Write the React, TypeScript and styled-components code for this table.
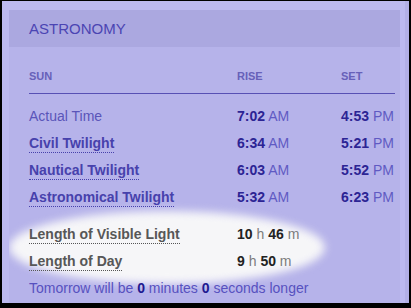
import React from 'react';
import styled, { createGlobalStyle } from 'styled-components';

const Global = createGlobalStyle`
  html, body {
    margin: 0;
    padding: 0;
    background: #000;
  }
  body {
    font-family: "Liberation Sans", Arial, sans-serif;
  }
`;

const Frame = styled.div`
  box-sizing: border-box;
  margin: 1px 2px 0 2px;
  width: 407px;
  height: 302px;
  padding: 9px 0 0 7px;
  background: #bcb9ef;
  border-right: 4px solid #b2afe6;
  display: flex;
`;

const Card = styled.section`
  width: 391px;
  background: #b6b3ea;
  display: flex;
  flex-direction: column;
  overflow: hidden;
`;

const Title = styled.h2`
  margin: 0;
  height: 37px;
  line-height: 37px;
  padding-left: 20px;
  background: #aba8e0;
  color: #4b45b3;
  font-size: 15px;
  font-weight: normal;
`;

const Content = styled.div`
  position: relative;
  padding: 0 5px 0 20px;
`;

/* soft white spotlight behind the day-length rows */
const Glow = styled.div`
  position: absolute;
  left: 0;
  top: 164px;
  width: 316px;
  height: 73px;
  border-radius: 50%;
  background: #f6f6f8;
  filter: blur(4px);
  z-index: 0;
`;

const HeadRow = styled.div`
  display: grid;
  grid-template-columns: 208px 104px 1fr;
  padding: 23px 0 10px;
  line-height: 13px;
  font-size: 11px;
  font-weight: bold;
  color: #6761b9;
  border-bottom: 1px solid #5750b4;
`;

const Rows = styled.div`
  position: relative;
  z-index: 1;
  padding-top: 9px;
`;

const Row = styled.div<{ $gap?: boolean }>`
  display: grid;
  grid-template-columns: 208px 104px 1fr;
  height: 27px;
  line-height: 27px;
  font-size: 14px;
  margin-top: ${(p) => (p.$gap ? '10px' : '0')};
`;

const Plain = styled.span`
  color: #5a55b9;
`;

const Term = styled.span<{ $grey?: boolean }>`
  font-weight: bold;
  color: ${(p) => (p.$grey ? '#575757' : '#4741ac')};
  padding-bottom: 1px;
  border-bottom: 1px dotted ${(p) => (p.$grey ? '#555' : '#4741ac')};
`;

const Num = styled.b<{ $grey?: boolean }>`
  color: ${(p) => (p.$grey ? '#222' : '#2c2494')};
`;

const Unit = styled.span<{ $grey?: boolean }>`
  color: ${(p) => (p.$grey ? '#7c7c7c' : '#605ac3')};
`;

const Note = styled.div`
  grid-column: 1 / -1;
  color: #5751bf;
`;

const Zero = styled.b`
  color: #211990;
`;

type TimeRow = { label: string; defined: boolean; rise: string; set: string };

const rows: TimeRow[] = [
  { label: 'Actual Time', defined: false, rise: '7:02', set: '4:53' },
  { label: 'Civil Twilight', defined: true, rise: '6:34', set: '5:21' },
  { label: 'Nautical Twilight', defined: true, rise: '6:03', set: '5:52' },
  { label: 'Astronomical Twilight', defined: true, rise: '5:32', set: '6:23' },
];

const lengths = [
  { label: 'Length of Visible Light', h: '10', m: '46' },
  { label: 'Length of Day', h: '9', m: '50' },
];

export default function App() {
  return (
    <>
      <Global />
      <Frame>
        <Card>
          <Title>ASTRONOMY</Title>
          <Content>
            <Glow />
            <HeadRow>
              <span>SUN</span>
              <span>RISE</span>
              <span>SET</span>
            </HeadRow>
            <Rows>
              {rows.map((r) => (
                <Row key={r.label}>
                  <span>{r.defined ? <Term>{r.label}</Term> : <Plain>{r.label}</Plain>}</span>
                  <span>
                    <Num>{r.rise}</Num> <Unit>AM</Unit>
                  </span>
                  <span>
                    <Num>{r.set}</Num> <Unit>PM</Unit>
                  </span>
                </Row>
              ))}
              {lengths.map((l, i) => (
                <Row key={l.label} $gap={i === 0}>
                  <span>
                    <Term $grey>{l.label}</Term>
                  </span>
                  <span>
                    <Num $grey>{l.h}</Num> <Unit $grey>h</Unit> <Num $grey>{l.m}</Num>{' '}
                    <Unit $grey>m</Unit>
                  </span>
                </Row>
              ))}
              <Row>
                <Note>
                  Tomorrow will be <Zero>0</Zero> minutes <Zero>0</Zero> seconds longer
                </Note>
              </Row>
            </Rows>
          </Content>
        </Card>
      </Frame>
    </>
  );
}
